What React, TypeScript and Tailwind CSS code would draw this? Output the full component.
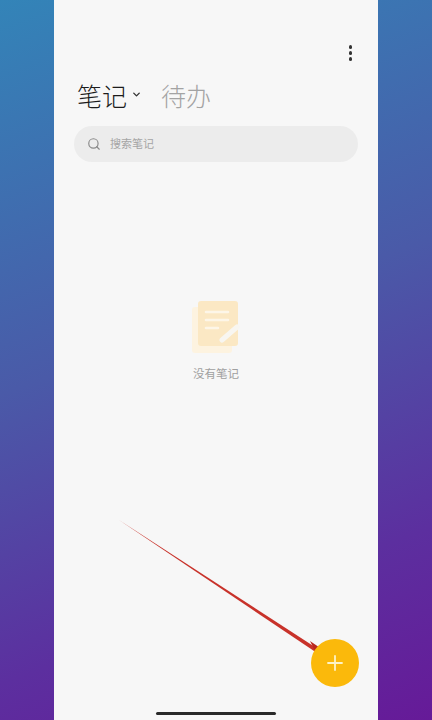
import { ChevronDown, Plus, Search } from 'lucide-react';

const cjk = '[font-family:"Noto_Sans_CJK_SC","Noto_Sans",sans-serif]';

const EmptyIcon = () => (
  <svg width="48" height="54" viewBox="0 0 48 54" fill="none">
    <rect x="0" y="6" width="40" height="46" rx="3" fill="#fdf3e0" />
    <rect x="6" y="0" width="40" height="45" rx="3" fill="#fbe8c4" />
    <path d="M14 11H36M14 19H36M14 27H26" stroke="#fdf6e8" strokeWidth="2.6" strokeLinecap="round" />
    <path d="M30 39L45 26" stroke="#f8f6f1" strokeWidth="5" strokeLinecap="round" />
  </svg>
);

export default function App() {
  return (
    <div className={`relative w-[432px] h-[720px] overflow-hidden flex justify-center bg-[linear-gradient(160deg,#3384b8_0%,#4a5aa8_45%,#5c2f9f_78%,#661a98_100%)] ${cjk}`}>
      <div className="w-[324px] h-full bg-[#f7f7f7] flex flex-col">
        <div className="flex justify-end pt-[45px] pr-[26px]">
          <div className="flex flex-col gap-[2.5px] items-center">
            <span className="w-[3.5px] h-[3.5px] rounded-full bg-[#333333]" />
            <span className="w-[3.5px] h-[3.5px] rounded-full bg-[#333333]" />
            <span className="w-[3.5px] h-[3.5px] rounded-full bg-[#333333]" />
          </div>
        </div>

        <div className="flex items-center pl-[23px] mt-[16px] h-[36px]">
          <span className="text-[25px] leading-[36px] font-light text-[#1c1c1c]">笔记</span>
          <ChevronDown size={11} strokeWidth={3} className="ml-[4px] text-[#333333]" />
          <span className="ml-[19px] text-[25px] leading-[36px] font-light text-[#a3a3a3]">待办</span>
        </div>

        <div className="mx-[20px] mt-[13px] h-[36px] rounded-full bg-[#ececec] flex items-center pl-[13px] gap-[9px]">
          <Search size={14} strokeWidth={2} className="text-[#8a8a8a]" />
          <span className="text-[11px] text-[#a5a5a5]">搜索笔记</span>
        </div>

        <div className="flex flex-col items-center mt-[139px] pl-[-2px]">
          <EmptyIcon />
          <span className="mt-[10px] text-[11.5px] leading-[16px] text-[#a0a0a0]">没有笔记</span>
        </div>
      </div>

      {/* red annotation arrow */}
      <svg className="absolute left-[110px] top-[510px]" width="225" height="150" viewBox="0 0 225 150" fill="none">
        <path d="M9 10L208 139L207 143Z" fill="#c8322a" />
        <path d="M200 131L219 144L205 141Z" fill="#b9281f" />
      </svg>

      <div className="absolute left-[311px] top-[639px] w-[48px] h-[48px] rounded-full bg-[#fbb90b] flex items-center justify-center">
        <Plus size={24} strokeWidth={1.8} className="text-[#fdf3c8]" />
      </div>

      <div className="absolute left-[156px] top-[712px] w-[120px] h-[3px] rounded-full bg-[#2a2a2a]" />
    </div>
  );
}
